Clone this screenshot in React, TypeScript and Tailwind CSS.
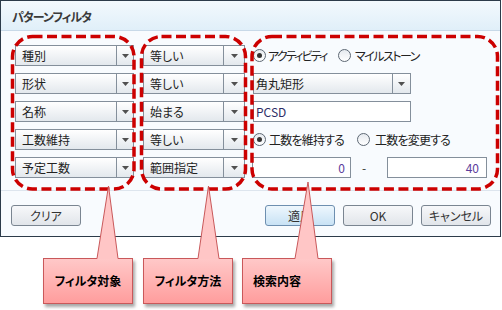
import React from 'react';

const Arrow = () => (
  <svg width="7" height="4" viewBox="0 0 7 4">
    <path d="M0 0h7L3.5 4z" fill="#505050" />
  </svg>
);

type SelectProps = { label: string; className: string; arrowClass: string; padClass: string };

const Select = ({ label, className, arrowClass, padClass }: SelectProps) => (
  <div className={`flex h-[21px] border border-[#848f9b] bg-linear-to-b from-white to-[#e3e8ed] ${className}`}>
    <div className={`flex flex-1 items-center leading-none text-[12px] text-[#222] ${padClass}`}>{label}</div>
    <div className={`flex items-center justify-center border-l border-[#848f9b] ${arrowClass}`}>
      <Arrow />
    </div>
  </div>
);

type RadioProps = { on?: boolean; label: string; labelClass: string; className?: string };

const Radio = ({ on, label, labelClass, className = '' }: RadioProps) => (
  <div className={`flex items-center ${className}`}>
    <span className="flex h-[13px] w-[13px] shrink-0 items-center justify-center rounded-full border border-[#5d6874] bg-linear-to-b from-[#e6eaef] to-white">
      {on && <span className="h-[5px] w-[5px] rounded-full bg-[#333]" />}
    </span>
    <span className={`whitespace-nowrap leading-none text-[12px] text-[#222] ${labelClass}`}>{label}</span>
  </div>
);

const Button = ({ label, blue }: { label: string; blue?: boolean }) => (
  <button
    className={`flex h-[21px] w-[70px] items-center justify-center rounded-[3px] border leading-none text-[12px] text-[#333] ${
      blue
        ? 'border-[#6d8fb0] bg-linear-to-b from-[#eef7fd] to-[#c8e2f5]'
        : 'border-[#7a8591] bg-linear-to-b from-[#f7f8fa] to-[#e1e5ea]'
    }`}
  >
    {label}
  </button>
);

const Callout = ({ label, className }: { label: string; className: string }) => (
  <div
    className={`flex h-[46px] w-[90px] items-center border border-[#c9585a] bg-linear-to-b from-[#ffc8c8] to-[#ff9d9d] shadow-[2px_3px_3px_rgba(0,0,0,0.35)] text-[12px] font-bold text-black ${className}`}
  >
    {label}
  </div>
);

const pointers = [
  { ax: 108.5, ay: 186, l: 97, r: 118 },
  { ax: 208.5, ay: 186, l: 198, r: 219 },
  { ax: 308, ay: 182, l: 295, r: 318 },
];

export default function App() {
  return (
    <div className="relative h-[310px] w-[502px] overflow-hidden bg-white font-['Noto_Sans_CJK_JP',sans-serif] [font-feature-settings:'palt']">
      {/* dialog */}
      <div className="flex h-[237px] w-[501px] flex-col border border-[#2c3b4a] bg-[#f8fbfe]">
        <div className="flex h-[30px] items-center border-b border-[#c8d9e8] bg-linear-to-b from-[#f3f9fd] to-[#e0eff9] pl-[11px] pt-[2px] text-[12px] font-bold tracking-[-1px] text-[#3a3a3a]">
          パターンフィルタ
        </div>

        <div className="flex flex-col gap-[7px] pl-[14px] pt-[14px]">
          <div className="flex items-center">
            <Select label="種別" className="w-[119px]" arrowClass="w-[17px]" padClass="pl-[6px]" />
            <Select label="等しい" className="ml-[9px] w-[102px]" arrowClass="w-[21px]" padClass="pl-[6px]" />
            <div className="ml-[8px] flex items-center">
              <Radio on label="アクティビティ" labelClass="ml-[2px] tracking-[-1.8px]" className="w-[85px]" />
              <Radio label="マイルストーン" labelClass="ml-[4px] tracking-[-1.5px]" />
            </div>
          </div>
          <div className="flex items-center">
            <Select label="形状" className="w-[119px]" arrowClass="w-[17px]" padClass="pl-[6px]" />
            <Select label="等しい" className="ml-[9px] w-[102px]" arrowClass="w-[21px]" padClass="pl-[6px]" />
            <Select label="角丸矩形" className="ml-[8px] w-[158px]" arrowClass="w-[18px]" padClass="pl-[2px]" />
          </div>
          <div className="flex items-center">
            <Select label="名称" className="w-[119px]" arrowClass="w-[17px]" padClass="pl-[6px]" />
            <Select label="始まる" className="ml-[9px] w-[102px]" arrowClass="w-[21px]" padClass="pl-[6px]" />
            <div className="ml-[8px] flex h-[21px] w-[158px] items-center border border-[#848f9b] bg-white pl-[2px] leading-none text-[12px] text-[#2e2e66]">
              PCSD
            </div>
          </div>
          <div className="flex items-center">
            <Select label="工数維持" className="w-[119px]" arrowClass="w-[17px]" padClass="pl-[6px]" />
            <Select label="等しい" className="ml-[9px] w-[102px]" arrowClass="w-[21px]" padClass="pl-[6px]" />
            <div className="ml-[8px] flex items-center">
              <Radio on label="工数を維持する" labelClass="ml-[3px] tracking-[-0.8px]" className="w-[104px]" />
              <Radio label="工数を変更する" labelClass="ml-[5px] tracking-[-0.8px]" />
            </div>
          </div>
          <div className="flex items-center">
            <Select label="予定工数" className="w-[119px]" arrowClass="w-[17px]" padClass="pl-[6px]" />
            <Select label="範囲指定" className="ml-[9px] w-[102px]" arrowClass="w-[21px]" padClass="pl-[6px]" />
            <div className="ml-[7px] flex items-center">
              <div className="flex h-[21px] w-[99px] items-center justify-end border border-[#848f9b] bg-white pr-[5px] leading-none text-[12px] text-[#5b3c9c]">
                0
              </div>
              <span className="ml-[11px] w-[25px] leading-none text-[12px] text-[#333]">-</span>
              <div className="flex h-[21px] w-[100px] items-center justify-end border border-[#848f9b] bg-white pr-[7px] leading-none text-[12px] text-[#5b3c9c]">
                40
              </div>
            </div>
          </div>
        </div>

        <div className="mt-[12px] h-px bg-[#dde5ee]" />

        <div className="flex items-center justify-between pl-[10px] pr-[9px] pt-[14px]">
          <Button label="クリア" />
          <div className="flex gap-[8px]">
            <Button label="適用" blue />
            <Button label="OK" />
            <Button label="キャンセル" />
          </div>
        </div>
      </div>

      {/* callouts */}
      <div className="flex pl-[43px] pt-[21px]">
        <Callout label="フィルタ対象" className="justify-center" />
        <Callout label="フィルタ方法" className="ml-[10px] justify-center" />
        <Callout label="検索内容" className="ml-[9px] pl-[10px]" />
      </div>

      {/* annotation overlay */}
      <svg className="pointer-events-none absolute left-0 top-0" width="502" height="310" viewBox="0 0 502 310">
        <g fill="none" stroke="#cc0000" strokeWidth="3.5" strokeDasharray="10 4.5">
          <rect x="12.5" y="36.5" width="121.5" height="152.5" rx="20" />
          <rect x="141.5" y="36.5" width="104" height="152.5" rx="20" />
          <rect x="252" y="36.5" width="245.5" height="152.5" rx="20" />
        </g>
        {pointers.map((p, i) => (
          <g key={i}>
            <polygon points={`${p.ax},${p.ay} ${p.r},259 ${p.l},259`} fill="#ffc6c6" />
            <path d={`M${p.l} 258.5 L${p.ax} ${p.ay} L${p.r} 258.5`} fill="none" stroke="#c9585a" strokeWidth="1" />
          </g>
        ))}
      </svg>
    </div>
  );
}
